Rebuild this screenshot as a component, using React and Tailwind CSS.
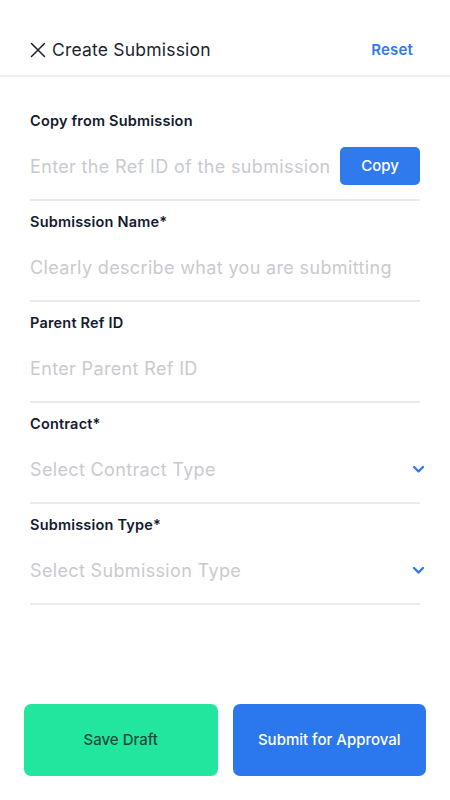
import React from 'react'

const font = { fontFamily: '"Inter", "Noto Sans", sans-serif' }

function Chevron() {
  return (
    <svg width="13" height="9" viewBox="0 0 13 9" className="-mr-[5px]">
      <path d="M2 2l4.5 4.5L11 2" fill="none" stroke="#2f7bee" strokeWidth="2.4" strokeLinecap="round" strokeLinejoin="round" />
    </svg>
  )
}

function Field({ label, placeholder, select, action }) {
  return (
    <div className="pt-[11px]">
      <div className="h-[19px] flex items-center text-[14.5px] font-semibold text-[#141a2e] tracking-[0.2px]">{label}</div>
      <div className="h-[71px] pt-[3px] flex items-center justify-between border-b-2 border-[#e9eaf0]">
        <span className="text-[18px] text-[#c9cacf] tracking-[0.35px]">{placeholder}</span>
        {select && <Chevron />}
        {action && (
          <button className="w-[80px] h-[38px] rounded-[5px] bg-[#2f7bee] text-white text-[15px] font-medium">
            {action}
          </button>
        )}
      </div>
    </div>
  )
}

export default function App() {
  return (
    <div className="min-h-screen flex flex-col bg-white" style={font}>
      <div className="pt-[38px] pb-[13px] px-[30px] flex items-center justify-between border-b-2 border-[#eceef4]">
        <div className="flex items-center h-6">
          <svg width="16" height="16" viewBox="0 0 16 16" className="mr-[6px]">
            <path d="M1.5 1.5l13 13M14.5 1.5l-13 13" stroke="#1b1f2e" strokeWidth="1.5" strokeLinecap="round" />
          </svg>
          <span className="text-[17.5px] text-[#1b1f33] tracking-[0.2px]">Create Submission</span>
        </div>
        <span className="text-[15px] font-semibold text-[#2f7bee] mr-[7px] tracking-[0.2px]">Reset</span>
      </div>

      <div className="px-[30px] pt-[23px]">
        <Field label="Copy from Submission" placeholder="Enter the Ref ID of the submission" action="Copy" />
        <Field label="Submission Name*" placeholder="Clearly describe what you are submitting" />
        <Field label="Parent Ref ID" placeholder="Enter Parent Ref ID" />
        <Field label="Contract*" placeholder="Select Contract Type" select />
        <Field label="Submission Type*" placeholder="Select Submission Type" select />
      </div>

      <div className="mt-auto grid grid-cols-2 gap-[15px] px-[24px] pb-[24px]">
        <button className="h-[72px] rounded-[7px] bg-[#23e69e] text-[#1f4a3f] text-[15px] font-medium">
          Save Draft
        </button>
        <button className="h-[72px] rounded-[7px] bg-[#2b78ee] text-white text-[15px] font-medium">
          Submit for Approval
        </button>
      </div>
    </div>
  )
}
